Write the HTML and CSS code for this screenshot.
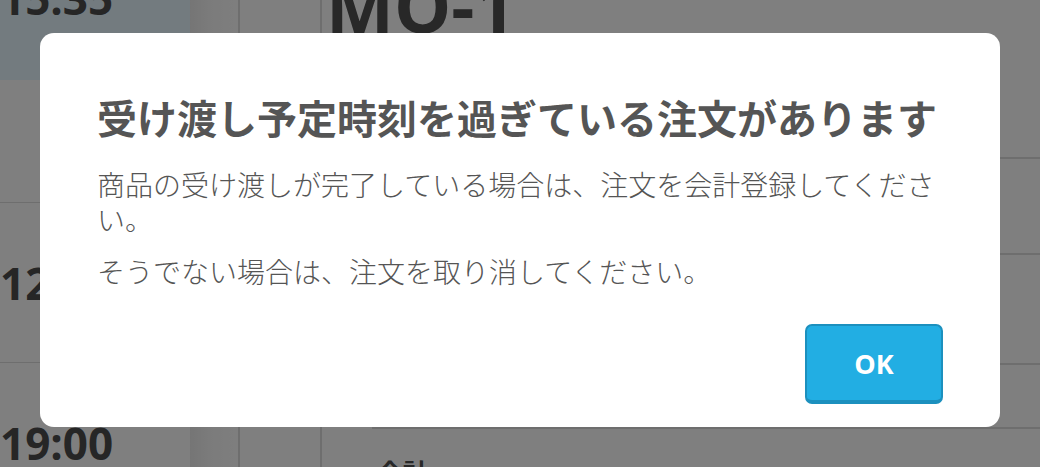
FILE: index.html
```html
<!DOCTYPE html>
<html lang="ja">
<head>
<meta charset="utf-8">
<title>注文</title>
<link rel="stylesheet" href="styles.css">
</head>
<body>
<div class="app">
  <aside class="orders">
    <div class="order order-selected"><span class="order-time">15:35</span></div>
    <div class="order order-short"><span class="order-time"></span></div>
    <div class="order"><span class="order-time">12:10</span></div>
    <div class="order"><span class="order-time">19:00</span></div>
  </aside>
  <div class="gutter"></div>
  <div class="side"></div>
  <main class="detail">
    <header class="detail-head"><h1 class="order-no">MO-1</h1></header>
    <div class="rows">
      <div class="row row-a"></div>
      <div class="row row-b"></div>
      <div class="row row-c"></div>
      <div class="total"><span class="total-label">合計</span><span class="total-note">（税込金額）</span></div>
    </div>
  </main>
</div>

<div class="overlay">
  <div class="dialog" role="alertdialog">
    <h2 class="dialog-title">受け渡し予定時刻を過ぎている注文があります</h2>
    <div class="dialog-body">
      <p class="dialog-line">商品の受け渡しが完了している場合は、注文を会計登録してください。</p>
      <p class="dialog-line">そうでない場合は、注文を取り消してください。</p>
    </div>
    <div class="dialog-actions"><button class="btn-ok" type="button">OK</button></div>
  </div>
</div>
</body>
</html>
```

FILE: styles.css
```css
html, body {
  margin: 0;
  padding: 0;
  height: 467px;
  overflow: hidden;
  background: #fff;
  font-family: "Noto Sans CJK JP", "Noto Sans", sans-serif;
}

.app {
  display: flex;
  height: 467px;
  overflow: hidden;
}

/* left order list */
.orders {
  width: 190px;
  flex: none;
  display: flex;
  flex-direction: column;
}
.order {
  flex: none;
  height: 160px;
  display: flex;
  align-items: center;
  border-bottom: 1px solid #dcdcdc;
  box-sizing: border-box;
  background: #fff;
}
.order-selected {
  height: 165px;
  margin-top: -85px;
  background: #e6f6fe;
  border-bottom: none;
}
.order-short {
  height: 123px;
}
.order-time {
  font-family: "Open Sans", "Liberation Sans", sans-serif;
  font-weight: 700;
  font-size: 44px;
  line-height: 1;
  color: #4c4c4c;
  white-space: nowrap;
}

.gutter {
  width: 48px;
  flex: none;
  background: linear-gradient(to right, #ebebeb, #f7f7f7 20px, #fdfdfd);
  border-right: 2px solid #dcdcdc;
}
.side {
  width: 80px;
  flex: none;
  border-right: 2px solid #dcdcdc;
}

/* detail */
.detail {
  flex: 1;
  display: flex;
  flex-direction: column;
}
.detail-head {
  height: 157px;
  flex: none;
  padding-left: 4px;
}
.order-no {
  margin: -31px 0 0;
  font-family: "Open Sans", "Liberation Sans", sans-serif;
  font-weight: 700;
  font-size: 72px;
  line-height: 72px;
  color: #505050;
}
.rows {
  margin-left: 50px;
  display: flex;
  flex-direction: column;
}
.row {
  flex: none;
  border-top: 2px solid #dcdcdc;
  box-sizing: border-box;
}
.row-a { height: 96px; }
.row-b { height: 110px; }
.row-c { height: 64px; }
.total {
  border-top: 2px solid #dcdcdc;
  padding: 30px 0 0 5px;
  display: flex;
  align-items: baseline;
  gap: 10px;
  color: #505050;
}
.total-label {
  font-weight: 700;
  font-size: 26px;
  line-height: 1;
}
.total-note {
  font-size: 16px;
}

/* modal */
.overlay {
  position: fixed;
  inset: 0;
  background: rgba(0, 0, 0, 0.5);
  display: flex;
  justify-content: center;
  align-items: flex-start;
  padding-top: 33px;
}
.dialog {
  width: 960px;
  box-sizing: border-box;
  background: #fff;
  border-radius: 14px;
  padding: 54px 57px 23px;
}
.dialog-title {
  margin: 0;
  font-size: 40px;
  line-height: 60px;
  font-weight: 700;
  color: #555;
}
.dialog-body {
  margin-top: 20px;
  display: flex;
  flex-direction: column;
  gap: 17px;
}
.dialog-line {
  margin: 0;
  font-size: 28px;
  line-height: 35px;
  font-weight: 300;
  color: #555;
}
.dialog-actions {
  margin-top: 35px;
  display: flex;
  justify-content: flex-end;
}
.btn-ok {
  width: 138px;
  height: 80px;
  box-sizing: border-box;
  background: #22aee3;
  border: 2px solid #1c90be;
  border-bottom-width: 4px;
  border-radius: 7px;
  color: #fff;
  font-family: "Open Sans", "Liberation Sans", sans-serif;
  font-weight: 700;
  font-size: 27px;
  padding: 0;
}
```
